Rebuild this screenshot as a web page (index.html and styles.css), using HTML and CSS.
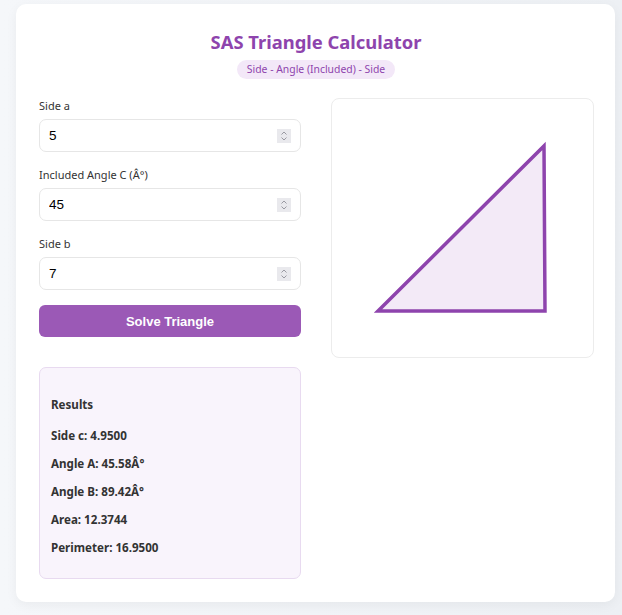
FILE: index.html
```html
<!DOCTYPE html>
<html lang="en">
	<head>
		<meta charset="utf-8">
		<title>SAS Triangle Calculator</title>
		<link rel="stylesheet" href="styles.css">
	</head>
	<body>
		<div class="card">
			<h1 class="title">SAS Triangle Calculator</h1>
			<div class="center"><span class="pill">Side - Angle (Included) - Side</span></div>

			<div class="main">
				<div class="left">
					<label class="lbl" for="a">Side a</label>
					<div class="field">
						<input id="a" class="num" type="number" value="5">
						<svg class="spin" viewBox="0 0 14 14" width="14" height="14"><rect width="14" height="14" fill="#e9e9ed"/><path d="M4.5 5.5 L7 3 L9.5 5.5 M4.5 8.5 L7 11 L9.5 8.5" fill="none" stroke="#9a9aa2" stroke-width="1"/></svg>
					</div>

					<label class="lbl" for="c">Included Angle C (Â°)</label>
					<div class="field">
						<input id="c" class="num" type="number" value="45">
						<svg class="spin" viewBox="0 0 14 14" width="14" height="14"><rect width="14" height="14" fill="#e9e9ed"/><path d="M4.5 5.5 L7 3 L9.5 5.5 M4.5 8.5 L7 11 L9.5 8.5" fill="none" stroke="#9a9aa2" stroke-width="1"/></svg>
					</div>

					<label class="lbl" for="b">Side b</label>
					<div class="field">
						<input id="b" class="num" type="number" value="7">
						<svg class="spin" viewBox="0 0 14 14" width="14" height="14"><rect width="14" height="14" fill="#e9e9ed"/><path d="M4.5 5.5 L7 3 L9.5 5.5 M4.5 8.5 L7 11 L9.5 8.5" fill="none" stroke="#9a9aa2" stroke-width="1"/></svg>
					</div>

					<button class="btn">Solve Triangle</button>

					<div class="results">
						<h3>Results</h3>
						<p>Side c: 4.9500</p>
						<p>Angle A: 45.58Â°</p>
						<p>Angle B: 89.42Â°</p>
						<p>Area: 12.3744</p>
						<p>Perimeter: 16.9500</p>
					</div>
				</div>

				<div class="canvas">
					<svg viewBox="0 0 261 258" width="261" height="258">
						<polygon points="46,212 212,47 213,212" fill="#f3eaf7" stroke="#8e44ad" stroke-width="3.5" stroke-linejoin="miter"/>
					</svg>
				</div>
			</div>
		</div>
	</body>
</html>
```

FILE: styles.css
```css
body, html {
	margin:0;
	padding:0;
}
body {
	font-family:"Noto Sans", sans-serif;
	background:linear-gradient(to right, #f5f7fa, #edf0f4);
	padding:4px 0 0 16px;
	height:611px;
	color:#333;
}
.card {
	width:599px;
	height:598px;
	box-sizing:border-box;
	background:#fff;
	border-radius:10px;
	box-shadow:0 3px 12px rgba(0,0,0,0.05);
	padding:24px 22px 0 23px;
}
.title {
	margin:0;
	font-size:18.4px;
	line-height:28px;
	text-align:center;
	color:#8e44ad;
	font-weight:700;
}
.center {
	text-align:center;
	height:19px;
}
.pill {
	display:inline-block;
	background:#f3e8f8;
	color:#8e44ad;
	font-size:10.4px;
	line-height:15px;
	padding:2px 10px;
	border-radius:10px;
}
.main {
	margin-top:23px;
	display:grid;
	grid-template-columns:262px 263px;
	gap:30px;
	align-items:start;
}
.left {
	display:flex;
	flex-direction:column;
}
.lbl {
	font-size:11px;
	line-height:15px;
	color:#333;
	margin-bottom:6px;
}
.field {
	position:relative;
	margin:0 0 15px 0;
}
.num {
	display:block;
	width:100%;
	height:33px;
	box-sizing:border-box;
	border:1px solid #e6e6e6;
	border-radius:7px;
	padding:0 8px 0 9px;
	font-family:"Liberation Sans", sans-serif;
	font-size:13.5px;
	color:#000;
	margin:0;
	outline:none;
	-moz-appearance:textfield;
}
.num::-webkit-inner-spin-button,
.num::-webkit-outer-spin-button {
	-webkit-appearance:none;
	margin:0;
}
.spin {
	position:absolute;
	right:10px;
	top:10px;
	display:block;
}
.btn {
	height:32px;
	border:none;
	border-radius:6px;
	background:#9b59b6;
	color:#fff;
	font-family:"Liberation Sans", sans-serif;
	font-weight:700;
	font-size:13px;
	cursor:pointer;
	margin:0;
}
.results {
	margin-top:30px;
	background:#f9f4fc;
	border:1px solid #e8daf0;
	border-radius:7px;
	padding:12px 11px 12px 11px;
	height:212px;
	box-sizing:border-box;
}
.results h3 {
	margin:16px 0 0 0;
	font-size:11.6px;
	line-height:18px;
	font-weight:700;
}
.results p {
	margin:10px 0 0 0;
	font-size:11.6px;
	line-height:18px;
	font-weight:700;
}
.results h3 + p {
	margin-top:13px;
}
.canvas {
	height:260px;
	box-sizing:border-box;
	border:1px solid #ececec;
	border-radius:8px;
	background:#fff;
}
.canvas svg {
	display:block;
}
```
